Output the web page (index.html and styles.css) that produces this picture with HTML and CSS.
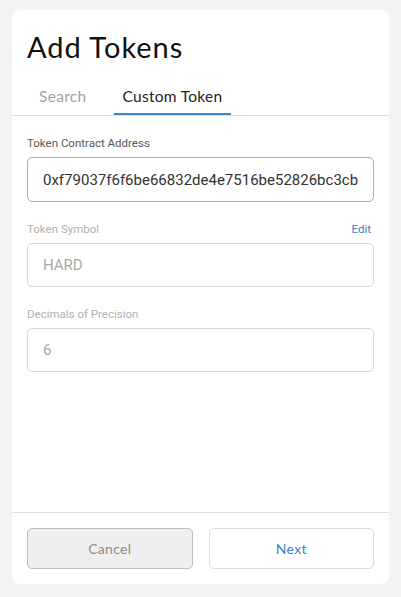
FILE: index.html
```html
<!DOCTYPE html>
<html>
<head>
<meta charset="utf-8">
<link rel="stylesheet" href="styles.css">
</head>
<body>
<div class="card">
  <div class="header">
    <h1 class="title">Add Tokens</h1>
    <div class="tabs">
      <div class="tab">Search</div>
      <div class="tab active">Custom Token</div>
    </div>
  </div>
  <div class="content">
    <div class="field">
      <div class="label-row"><span class="label dark">Token Contract Address</span></div>
      <div class="input focused">0xf79037f6f6be66832de4e7516be52826bc3cb</div>
    </div>
    <div class="field">
      <div class="label-row"><span class="label">Token Symbol</span><span class="edit">Edit</span></div>
      <div class="input muted">HARD</div>
    </div>
    <div class="field">
      <div class="label-row"><span class="label">Decimals of Precision</span></div>
      <div class="input muted">6</div>
    </div>
  </div>
  <div class="footer">
    <div class="btn cancel">Cancel</div>
    <div class="btn next">Next</div>
  </div>
</div>
</body>
</html>
```
FILE: styles.css
```css
html, body {
  margin: 0;
  padding: 0;
}
body {
  background: #f2f3f4;
  width: 401px;
  height: 597px;
  overflow: hidden;
  font-family: Lato, "Liberation Sans", sans-serif;
}
.card {
  margin: 10px 12px 0 12px;
  width: 377px;
  height: 574px;
  background: #fff;
  border-radius: 8px;
  display: flex;
  flex-direction: column;
}
.header {
  border-bottom: 1px solid #e0e0e0;
}
.title {
  margin: 0;
  padding: 19px 15px 0 15px;
  font-size: 29px;
  line-height: 36px;
  font-weight: 400;
  color: #111;
  letter-spacing: 1px;
}
.tabs {
  display: flex;
  padding: 22px 0 0 19px;
  gap: 20px;
}
.tab {
  padding: 0 8px 8px 8px;
  font-size: 15.5px;
  line-height: 18px;
  letter-spacing: 0.3px;
  color: #a3a3a3;
  border-bottom: 2px solid transparent;
}
.tab.active {
  color: #222;
  border-bottom-color: #3b86c4;
}
.content {
  flex: 1;
  padding: 19px 15px 0 15px;
  display: flex;
  flex-direction: column;
  gap: 19px;
}
.field {
  display: flex;
  flex-direction: column;
  gap: 6px;
}
.label-row {
  display: flex;
  justify-content: space-between;
  font-family: Roboto, "Liberation Sans", sans-serif;
  font-size: 11.5px;
  line-height: 16px;
}
.label {
  color: #b0b0b0;
}
.label.dark {
  color: #585858;
}
.edit {
  color: #3a80c0;
  margin-right: 3px;
}
.input {
  height: 44px;
  box-sizing: border-box;
  border: 1px solid #d8d8d8;
  border-radius: 5px;
  padding: 0 15px;
  display: flex;
  align-items: center;
  font-family: Roboto, "Liberation Sans", sans-serif;
  font-size: 15px;
  color: #333;
  white-space: nowrap;
  overflow: hidden;
}
.input.focused {
  height: 45px;
  border-color: #86b9de;
}
.input.muted {
  color: #a8a8a8;
}
.footer {
  border-top: 1px solid #e0e0e0;
  padding: 15px 15px 15px 15px;
  display: flex;
  gap: 16px;
}
.btn {
  flex: 1;
  height: 41px;
  box-sizing: border-box;
  border-radius: 5px;
  display: flex;
  align-items: center;
  justify-content: center;
  font-size: 14px;
  letter-spacing: 0.3px;
}
.cancel {
  background: #efefef;
  border: 1px solid #bdbdbd;
  color: #8a8a8a;
}
.next {
  background: #fff;
  border: 1px solid #dcdcdc;
  color: #3a7fbf;
}
```
